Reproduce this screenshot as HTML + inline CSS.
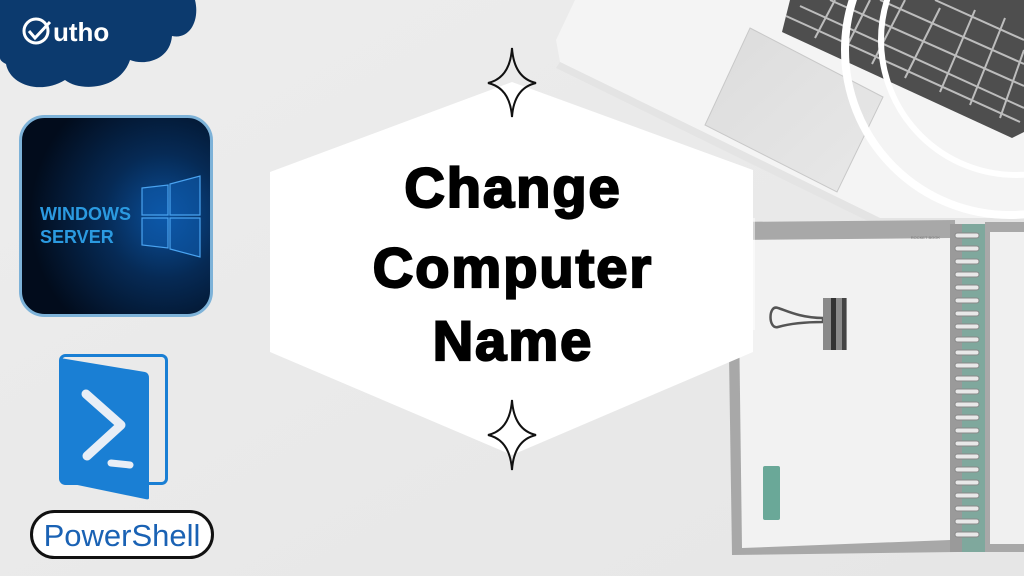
<!DOCTYPE html>
<html><head><meta charset="utf-8"><style>
html,body{margin:0;padding:0;width:1024px;height:576px;overflow:hidden;background:#ececec}
svg{display:block}
</style></head><body>
<svg width="1024" height="576" viewBox="0 0 1024 576" xmlns="http://www.w3.org/2000/svg">
<defs>
<linearGradient id="bg" x1="0" y1="0" x2="1" y2="1"><stop offset="0" stop-color="#ededed"/><stop offset="1" stop-color="#e6e6e6"/></linearGradient>
<radialGradient id="win" cx="0.75" cy="0.5" r="0.7"><stop offset="0" stop-color="#0a4f9a"/><stop offset="0.45" stop-color="#062a55"/><stop offset="1" stop-color="#020c1c"/></radialGradient>
<linearGradient id="tp" x1="0" y1="0" x2="1" y2="1"><stop offset="0" stop-color="#dcdcdc"/><stop offset="1" stop-color="#e8e8e8"/></linearGradient>
</defs>
<rect width="1024" height="576" fill="url(#bg)"/>
<!-- laptop -->
<polygon points="575,0 1024,0 1024,218 880,218 560,62 556,40" fill="#f4f4f4"/>
<polygon points="560,62 880,218 1024,218 1024,224 874,224 556,68" fill="#e4e4e4"/>
<polygon points="790,0 1024,0 1024,132 1012,138 782,32" fill="#4e4e4e"/>
<g stroke="#bdbdbd" stroke-width="2" fill="none">
<line x1="786" y1="16" x2="1020" y2="122"/>
<line x1="800" y1="6" x2="1024" y2="108"/>
<line x1="830" y1="0" x2="1024" y2="86"/>
<line x1="880" y1="0" x2="1024" y2="64"/>
<line x1="935" y1="0" x2="1024" y2="40"/>
<line x1="870" y1="0" x2="845" y2="50"/><line x1="905" y1="0" x2="872" y2="64"/>
<line x1="940" y1="8" x2="905" y2="78"/><line x1="975" y1="10" x2="940" y2="92"/>
<line x1="1005" y1="18" x2="970" y2="105"/><line x1="1024" y1="50" x2="1000" y2="118"/>
<line x1="835" y1="0" x2="815" y2="38"/>
</g>
<polygon points="750,28 883,97 837,192 705,125" fill="url(#tp)" stroke="#c8c8c8" stroke-width="1"/>
<circle cx="1010" cy="50" r="165" fill="none" stroke="#ffffff" stroke-width="8"/>
<circle cx="1016" cy="40" r="135" fill="none" stroke="#ffffff" stroke-width="6"/>
<!-- notebook -->
<polygon points="727,222 955,220 958,552 732,555" fill="#a8a8a8"/>
<polygon points="738,240 950,238 950,540 742,548" fill="#f2f2f2"/>
<rect x="950" y="224" width="12" height="328" fill="#9a9a9a"/>
<rect x="962" y="224" width="23" height="328" fill="#7fa89d"/>
<rect x="985" y="222" width="39" height="330" fill="#a8a8a8"/>
<rect x="990" y="232" width="34" height="312" fill="#f0f0f0"/>
<g fill="#e8e8e8" stroke="#888" stroke-width="1">
<rect x="955" y="233" width="24" height="5" rx="2.5"/><rect x="955" y="246" width="24" height="5" rx="2.5"/><rect x="955" y="259" width="24" height="5" rx="2.5"/><rect x="955" y="272" width="24" height="5" rx="2.5"/><rect x="955" y="285" width="24" height="5" rx="2.5"/><rect x="955" y="298" width="24" height="5" rx="2.5"/><rect x="955" y="311" width="24" height="5" rx="2.5"/><rect x="955" y="324" width="24" height="5" rx="2.5"/><rect x="955" y="337" width="24" height="5" rx="2.5"/><rect x="955" y="350" width="24" height="5" rx="2.5"/><rect x="955" y="363" width="24" height="5" rx="2.5"/><rect x="955" y="376" width="24" height="5" rx="2.5"/><rect x="955" y="389" width="24" height="5" rx="2.5"/><rect x="955" y="402" width="24" height="5" rx="2.5"/><rect x="955" y="415" width="24" height="5" rx="2.5"/><rect x="955" y="428" width="24" height="5" rx="2.5"/><rect x="955" y="441" width="24" height="5" rx="2.5"/><rect x="955" y="454" width="24" height="5" rx="2.5"/><rect x="955" y="467" width="24" height="5" rx="2.5"/><rect x="955" y="480" width="24" height="5" rx="2.5"/><rect x="955" y="493" width="24" height="5" rx="2.5"/><rect x="955" y="506" width="24" height="5" rx="2.5"/><rect x="955" y="519" width="24" height="5" rx="2.5"/><rect x="955" y="532" width="24" height="5" rx="2.5"/>
</g>
<text x="940" y="239" font-family="Liberation Sans" font-size="4" fill="#777" text-anchor="end">ROCKET BOOK</text>
<rect x="720" y="218" width="35" height="112" fill="#ffffff" fill-opacity="0.5"/>
<!-- clip -->
<path d="M823,318 C800,318 785,310 778,308 C768,304 768,330 778,327 C785,325 800,322 823,322 Z" fill="none" stroke="#555" stroke-width="2.5"/>
<rect x="823" y="298" width="24" height="52" fill="#8a8a8a"/>
<rect x="831" y="298" width="5" height="52" fill="#333"/>
<rect x="842" y="298" width="4" height="52" fill="#444"/>
<rect x="763" y="466" width="17" height="54" rx="2" fill="#6aa898"/>
<!-- hexagon -->
<polygon points="512,82 753,170 753,352 512,455 270,352 270,172" fill="#ffffff"/>
<!-- stars -->
<path d="M512,48 Q514,78 536,83 Q514,88 512,117 Q510,88 488,83 Q510,78 512,48 Z" fill="none" stroke="#111" stroke-width="2"/>
<path d="M512,400 Q514,430 536,435 Q514,440 512,470 Q510,440 488,435 Q510,430 512,400 Z" fill="none" stroke="#111" stroke-width="2"/>
<g font-family="Liberation Sans, sans-serif" font-weight="bold" font-size="56" text-anchor="middle" fill="#000" stroke="#000" stroke-width="2.2" letter-spacing="2">
<text x="513" y="207">Change</text>
<text x="513" y="287">Computer</text>
<text x="513" y="360">Name</text>
</g>
<!-- cloud logo -->
<path d="M0,0 H195 C200,20 190,40 172,36 C170,60 145,66 130,60 C120,90 80,92 65,80 C40,95 10,85 6,64 C2,62 0,60 0,58 Z" fill="#0c3a6e"/>
<circle cx="36" cy="31" r="12" fill="none" stroke="#fff" stroke-width="3"/>
<path d="M29,31 L35,38 L50,22" fill="none" stroke="#fff" stroke-width="3"/>
<text x="53" y="41" font-family="Liberation Sans, sans-serif" font-weight="bold" font-size="26" fill="#fff">utho</text>
<!-- windows server -->
<rect x="20.5" y="116.5" width="191" height="199" rx="24" fill="url(#win)" stroke="#7db2d8" stroke-width="3"/>
<g stroke="#4aa3f0" stroke-width="1.2" fill="#0e5fb5" fill-opacity="0.55">
<polygon points="142,188 168,185 168,215 142,215"/>
<polygon points="170,184 200,176 200,215 170,215"/>
<polygon points="142,218 168,218 168,248 142,245"/>
<polygon points="170,218 200,218 200,257 170,249"/>
</g>
<g font-family="Liberation Sans, sans-serif" font-weight="bold" font-size="18" fill="#2b9ae0">
<text x="40" y="220">WINDOWS</text>
<text x="40" y="243">SERVER</text>
</g>
<!-- powershell -->
<rect x="60.5" y="355.5" width="106" height="128" rx="5" fill="none" stroke="#1a7fd4" stroke-width="3"/>
<path d="M60,358 L145,372 Q149,373 149,378 L149,498 Q149,500 145,499 L63,482 Q60,481 60,477 Z" fill="#1a7fd4"/>
<path d="M86,394 L121,425 L87,456" fill="none" stroke="#e8eef6" stroke-width="9" stroke-linecap="round" stroke-linejoin="round"/>
<path d="M111,463 L130,465" stroke="#e8eef6" stroke-width="7" stroke-linecap="round"/>
<rect x="31.5" y="511.5" width="181" height="46" rx="23" fill="#fff" stroke="#111" stroke-width="3"/>
<text x="122" y="546" font-family="Liberation Sans, sans-serif" font-size="31" fill="#1a62b4" text-anchor="middle">PowerShell</text>
</svg>
</body></html>
